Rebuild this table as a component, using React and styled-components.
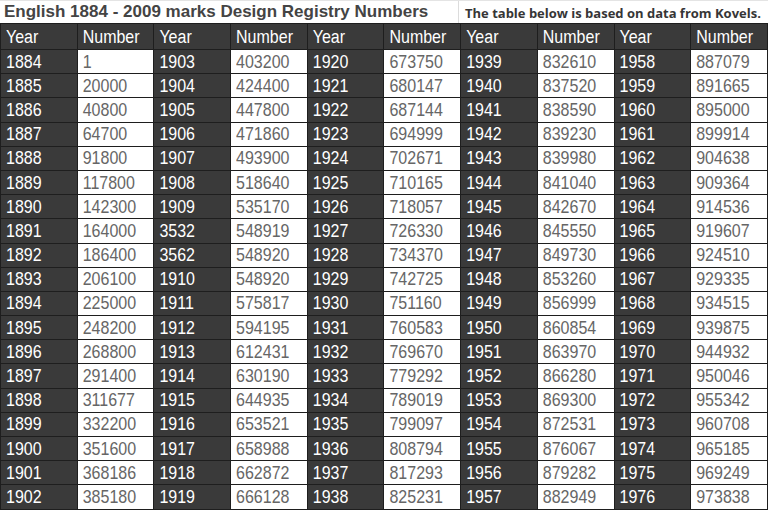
import React from 'react';
import styled, { createGlobalStyle } from 'styled-components';

const GlobalStyle = createGlobalStyle`
  html, body {
    margin: 0;
    padding: 0;
    background: #ffffff;
  }
`;

const Page = styled.div`
  width: 768px;
  height: 511px;
  overflow: hidden;
  background: #fff;
`;

const TitleBar = styled.div`
  display: flex;
  height: 23px;
  border-top: 1px solid #e4e4e4;
  box-sizing: border-box;
`;

const Title = styled.h1`
  margin: 0;
  width: 459px;
  padding-left: 4px;
  box-sizing: border-box;
  border-right: 1px solid #dcdcdc;
  font-family: 'Liberation Sans', Arial, sans-serif;
  font-weight: 700;
  font-size: 17px;
  line-height: 21px;
  color: #444444;
  white-space: nowrap;
`;

const Note = styled.p`
  margin: 0;
  flex: 1;
  padding-left: 6px;
  font-family: 'Open Sans', sans-serif;
  font-weight: 700;
  font-size: 13px;
  line-height: 24px;
  color: #363636;
  white-space: nowrap;
`;

const Table = styled.table`
  width: 768px;
  border-collapse: collapse;
  table-layout: fixed;
  font-family: 'Liberation Sans', Arial, sans-serif;
  font-size: 16px;
`;

const Cell = styled.td`
  height: 23.2px;
  padding: 0 0 0 5px;
  border: 1px solid #1e1e1e;
  background: ${({ $dark }) => ($dark ? '#3a3a3a' : '#ffffff')};
  color: ${({ $dark }) => ($dark ? '#ffffff' : '#666666')};
  white-space: nowrap;
  overflow: hidden;
  line-height: 20px;
`;

const HeadCell = styled(Cell).attrs({ as: 'th' })`
  height: 25px;
  text-align: left;
  font-weight: 400;
  background: #3a3a3a;
  color: #fff;
`;

const Text = styled.span`
  display: inline-block;
  transform: scaleY(1.18);
  transform-origin: center;
`;

const columns = [
  [
    [1884, 1], [1885, 20000], [1886, 40800], [1887, 64700], [1888, 91800],
    [1889, 117800], [1890, 142300], [1891, 164000], [1892, 186400], [1893, 206100],
    [1894, 225000], [1895, 248200], [1896, 268800], [1897, 291400], [1898, 311677],
    [1899, 332200], [1900, 351600], [1901, 368186], [1902, 385180],
  ],
  [
    [1903, 403200], [1904, 424400], [1905, 447800], [1906, 471860], [1907, 493900],
    [1908, 518640], [1909, 535170], [3532, 548919], [3562, 548920], [1910, 548920],
    [1911, 575817], [1912, 594195], [1913, 612431], [1914, 630190], [1915, 644935],
    [1916, 653521], [1917, 658988], [1918, 662872], [1919, 666128],
  ],
  [
    [1920, 673750], [1921, 680147], [1922, 687144], [1923, 694999], [1924, 702671],
    [1925, 710165], [1926, 718057], [1927, 726330], [1928, 734370], [1929, 742725],
    [1930, 751160], [1931, 760583], [1932, 769670], [1933, 779292], [1934, 789019],
    [1935, 799097], [1936, 808794], [1937, 817293], [1938, 825231],
  ],
  [
    [1939, 832610], [1940, 837520], [1941, 838590], [1942, 839230], [1943, 839980],
    [1944, 841040], [1945, 842670], [1946, 845550], [1947, 849730], [1948, 853260],
    [1949, 856999], [1950, 860854], [1951, 863970], [1952, 866280], [1953, 869300],
    [1954, 872531], [1955, 876067], [1956, 879282], [1957, 882949],
  ],
  [
    [1958, 887079], [1959, 891665], [1960, 895000], [1961, 899914], [1962, 904638],
    [1963, 909364], [1964, 914536], [1965, 919607], [1966, 924510], [1967, 929335],
    [1968, 934515], [1969, 939875], [1970, 944932], [1971, 950046], [1972, 955342],
    [1973, 960708], [1974, 965185], [1975, 969249], [1976, 973838],
  ],
];

const rows = columns[0].map((_, i) => columns.map((col) => col[i]));

export default function App() {
  return (
    <Page>
      <GlobalStyle />
      <TitleBar>
        <Title>English 1884 - 2009 marks Design Registry Numbers</Title>
        <Note>The table below is based on data from Kovels.</Note>
      </TitleBar>
      <Table>
        <thead>
          <tr>
            {columns.map((_, i) => (
              <React.Fragment key={i}>
                <HeadCell><Text>Year</Text></HeadCell>
                <HeadCell><Text>Number</Text></HeadCell>
              </React.Fragment>
            ))}
          </tr>
        </thead>
        <tbody>
          {rows.map((row, r) => (
            <tr key={r}>
              {row.map(([year, num], c) => (
                <React.Fragment key={c}>
                  <Cell $dark><Text>{year}</Text></Cell>
                  <Cell><Text>{num}</Text></Cell>
                </React.Fragment>
              ))}
            </tr>
          ))}
        </tbody>
      </Table>
    </Page>
  );
}
